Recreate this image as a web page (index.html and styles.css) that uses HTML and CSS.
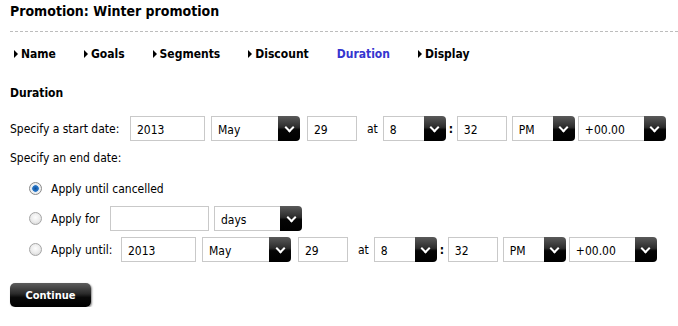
FILE: index.html
```html
<!DOCTYPE html>
<html lang="en">
<head>
    <meta charset="UTF-8">
    <title>Promotion: Winter promotion</title>
    <link rel="stylesheet" href="styles.css">
</head>
<body>
    <div class="page">
        <h1 class="title">Promotion: Winter promotion</h1>
        <div class="divider"></div>

        <ul class="steps">
            <li class="step">Name</li>
            <li class="step">Goals</li>
            <li class="step">Segments</li>
            <li class="step">Discount</li>
            <li class="step current">Duration</li>
            <li class="step">Display</li>
        </ul>

        <h2 class="section">Duration</h2>

        <div class="row start-row">
            <label class="lbl lbl-start">Specify a start date:</label>
            <input class="txt year" type="text" value="2013">
            <div class="select month"><select><option>May</option></select><span class="btn"></span></div>
            <input class="txt day" type="text" value="29">
            <span class="at">at</span>
            <div class="select hour"><select><option>8</option></select><span class="btn"></span></div>
            <span class="colon">:</span>
            <input class="txt minute" type="text" value="32">
            <div class="select ampm"><select><option>PM</option></select><span class="btn"></span></div>
            <div class="select tz"><select><option>+00.00</option></select><span class="btn"></span></div>
        </div>

        <p class="end-label">Specify an end date:</p>

        <div class="options">
            <div class="row opt opt-first">
                <input class="radio" type="radio" name="end" checked>
                <span class="opt-text">Apply until cancelled</span>
            </div>
            <div class="row opt">
                <input class="radio" type="radio" name="end">
                <label class="lbl lbl-for">Apply for</label>
                <input class="txt count" type="text" value="">
                <div class="select unit"><select><option>days</option></select><span class="btn"></span></div>
            </div>
            <div class="row opt opt-last">
                <input class="radio" type="radio" name="end">
                <label class="lbl lbl-until">Apply until:</label>
                <input class="txt year" type="text" value="2013">
                <div class="select month"><select><option>May</option></select><span class="btn"></span></div>
                <input class="txt day" type="text" value="29">
                <span class="at">at</span>
                <div class="select hour"><select><option>8</option></select><span class="btn"></span></div>
                <span class="colon">:</span>
                <input class="txt minute" type="text" value="32">
                <div class="select ampm"><select><option>PM</option></select><span class="btn"></span></div>
                <div class="select tz"><select><option>+00.00</option></select><span class="btn"></span></div>
            </div>
        </div>

        <button class="continue" type="button">Continue</button>
    </div>
</body>
</html>
```

FILE: styles.css
```css
html, body {
    margin: 0;
    padding: 0;
    background: #fff;
}
body {
    font-family: Tahoma, "DejaVu Sans Condensed", "DejaVu Sans", sans-serif;
    font-size: 12px;
    color: #000;
}
.page {
    padding-left: 10px;
}
.title {
    margin: 2px 0 0;
    font-size: 14px;
    line-height: 18px;
    font-weight: bold;
}
.divider {
    margin-top: 11px;
    border-top: 1px dashed #bdbdbd;
}

/* wizard steps */
.steps {
    list-style: none;
    margin: 14px 0 0;
    padding: 0 0 0 4px;
    display: flex;
    height: 16px;
    line-height: 16px;
}
.step {
    display: flex;
    align-items: center;
    font-weight: bold;
    margin-right: 28px;
}
.step::before {
    content: "";
    width: 0;
    height: 0;
    border-top: 4px solid transparent;
    border-bottom: 4px solid transparent;
    border-left: 4px solid #000;
    margin-right: 3px;
}
.step.current {
    color: #3535cf;
}
.step.current::before {
    display: none;
}

.section {
    margin: 23px 0 0;
    font-size: 12px;
    line-height: 16px;
    font-weight: bold;
}

/* form rows */
.row {
    display: flex;
    align-items: center;
    height: 25px;
}
.start-row {
    margin-top: 15px;
}
.lbl {
    flex: none;
}
.lbl-start { width: 120px; }
.lbl-for { width: 59px; }
.lbl-until { width: 70px; }

.txt {
    box-sizing: border-box;
    height: 25px;
    border: 1px solid #c9c9c9;
    padding: 2px 6px 0;
    font: inherit;
    color: #000;
    outline: none;
}
.year { width: 75px; margin-right: 6px; }
.day { width: 50px; margin-left: 7px; }
.minute { width: 50px; margin-right: 5px; }
.count { width: 99px; margin-right: 5px; }

.at { margin: 0 5px 0 10px; }
.colon { width: 8px; margin-left: 3px; font-weight: bold; }

.select {
    display: flex;
    height: 25px;
    box-sizing: border-box;
}
.select select {
    flex: 1;
    min-width: 0;
    box-sizing: border-box;
    height: 25px;
    border: 1px solid #c9c9c9;
    border-right: none;
    padding: 2px 6px 0;
    font: inherit;
    color: #000;
    background: #fff;
    appearance: none;
    -webkit-appearance: none;
    border-radius: 0;
    outline: none;
}
.select .btn {
    flex: none;
    width: 22px;
    height: 25px;
    border-radius: 0 4px 4px 0;
    background: linear-gradient(#5a5a5a 0%, #2c2c2c 45%, #050505 55%, #000 100%);
    display: flex;
    align-items: center;
    justify-content: center;
}
.select .btn::after {
    content: "";
    width: 5px;
    height: 5px;
    border-right: 2px solid #fff;
    border-bottom: 2px solid #fff;
    transform: rotate(45deg);
    margin-top: -3px;
}
.month { width: 89px; }
.hour { width: 63px; }
.ampm { width: 63px; margin-right: 3px; }
.tz { width: 88px; }
.unit { width: 88px; }

.end-label {
    margin: 9px 0 0;
    line-height: 16px;
}

/* end date options */
.options {
    padding-left: 19px;
}
.opt { margin-top: 5px; }
.opt-first { margin-top: 10px; }
.opt-last { margin-top: 6px; }
.radio {
    appearance: none;
    -webkit-appearance: none;
    flex: none;
    width: 13px;
    height: 13px;
    margin: 0 9px 0 0;
    border: 1px solid #a5a5a5;
    border-radius: 50%;
    background: radial-gradient(circle at 50% 40%, #fdfdfd 0%, #ececec 50%, #cfcfcf 100%);
    box-sizing: border-box;
}
.radio:checked {
    background: radial-gradient(circle, #0f4f9c 0%, #2a78c8 38%, #d8e4ef 46%, #f4f4f4 60%, #cfcfcf 100%);
    border-color: #8a8a8a;
}

.continue {
    display: block;
    margin-top: 21px;
    width: 81px;
    height: 24px;
    border: none;
    border-radius: 5px;
    background: linear-gradient(#5d5d5d 0%, #2a2a2a 45%, #0a0a0a 60%, #000 100%);
    box-shadow: 1px 1px 2px rgba(0, 0, 0, 0.45);
    color: #fff;
    font-family: inherit;
    font-size: 11px;
    font-weight: bold;
    padding: 0;
}
```
